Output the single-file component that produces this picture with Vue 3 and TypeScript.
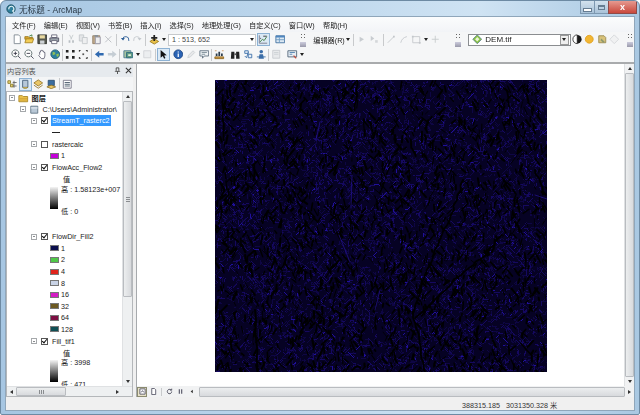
<template>
  <div class="win">
    <header class="titlebar">
      <svg class="app-icon" viewBox="0 0 12 12" aria-hidden="true">
        <circle cx="6" cy="6" r="5" fill="#2f7f9c" stroke="#1d4a5c" />
        <path d="M3.5 6.5a3 3 0 1 1 4.500 1.800L9.500 10.500" fill="none" stroke="#e4f2f6" stroke-width="1.400" />
      </svg>
      <span class="title-text">无标题 - ArcMap</span>
      <div class="win-btns">
        <span class="win-btn"><i class="glyph-min"></i></span>
        <span class="win-btn"><i class="glyph-max"></i></span>
        <span class="win-btn win-btn--close">x</span>
      </div>
    </header>

    <div class="client">
      <nav class="menubar">
        <span v-for="m in menus" :key="m">{{ m }}</span>
      </nav>

      <div class="toolbar toolbar--one">
        <template v-for="(it, i) in toolbarOne" :key="i">
          <i v-if="it === '|'" class="sep"></i>
          <i v-else-if="it === '^'" class="grip"></i>
          <i v-else-if="it === 'v'" class="drop"></i>
          <i v-else-if="it[0] === '_'" class="gap" :style="{ width: it.slice(1) + 'px' }"></i>
          <div v-else-if="it === 'scale'" class="combo combo--scale">
            <span>1 : 513, 652</span><i class="drop"></i>
          </div>
          <span v-else-if="it === 'editor'" class="tool-label">编辑器(R)</span>
          <div v-else-if="it === 'layer'" class="combo combo--layer">
            <svg class="ico" viewBox="0 0 12 12"><path d="M6 1l5 5-5 5-5-5z" fill="#8cc63f" stroke="#5a7f8a" /><path d="M6 3.500L8.500 6 6 8.500 3.500 6z" fill="#eaf5d8" /></svg>
            <span class="layer-name">DEM.tif</span>
            <span class="combo-btn"><i class="drop"></i></span>
          </div>
          <span v-else class="tool" :class="{ 'is-active': it === 'toggle' }">
            <svg class="ico" viewBox="0 0 12 12">
              <path v-for="(p, n) in icons[it]" :key="n" :d="p[0]" :fill="p[1]" :stroke="p[2] || 'none'" />
            </svg>
          </span>
        </template>
      </div>

      <div class="toolbar toolbar--two">
        <template v-for="(it, i) in toolbarTwo" :key="i">
          <i v-if="it === '|'" class="sep"></i>
          <i v-else-if="it === 'v'" class="drop"></i>
          <i v-else-if="it[0] === '_'" class="gap" :style="{ width: it.slice(1) + 'px' }"></i>
          <span v-else class="tool" :class="{ 'is-active': it === 'select' }">
            <svg class="ico" viewBox="0 0 12 12">
              <path v-for="(p, n) in icons[it]" :key="n" :d="p[0]" :fill="p[1]" :stroke="p[2] || 'none'" />
            </svg>
          </span>
        </template>
      </div>

      <main class="work">
        <aside class="toc">
          <div class="toc-head">
            <span>内容列表</span>
            <span class="toc-head__btns">
              <svg viewBox="0 0 8 8"><path d="M2.500 1h3v3l1 1h-5l1-1zM4 5v3" fill="none" stroke="#444" /></svg>
              <svg viewBox="0 0 8 8"><path d="M1 1l6 6M7 1L1 7" stroke="#333" stroke-width="1.200" /></svg>
            </span>
          </div>
          <div class="toc-tools">
            <span v-for="t in tocTools" :key="t" class="tool" :class="{ 'is-active': t === 'tocSource' }">
              <svg class="ico" viewBox="0 0 12 12">
                <path v-for="(p, n) in icons[t]" :key="n" :d="p[0]" :fill="p[1]" :stroke="p[2] || 'none'" />
              </svg>
            </span>
            <i class="sep"></i>
            <span class="tool">
              <svg class="ico" viewBox="0 0 12 12"><path d="M1.500 1.500h9v9h-9z" fill="#fff" stroke="#778" /><path d="M3 4h6M3 6h6M3 8h6" stroke="#456" /></svg>
            </span>
          </div>
          <div class="toc-body">
            <div class="tree">
              <div class="tree-inner">
                <template v-for="(r, i) in rows" :key="i">
                  <div v-if="r.kind === 'root'" class="row row--root">
                    <i class="box"></i>
                    <svg class="ico ico--tree" viewBox="0 0 12 12"><path d="M1 3h4l1 1h5v6H1z" fill="#f0c850" stroke="#a98524" /><path d="M2 6h9M2 8h9" stroke="#c99a2e" /></svg>
                    <b>图层</b>
                  </div>
                  <div v-else-if="r.kind === 'path'" class="row row--path">
                    <i class="box"></i>
                    <svg class="ico ico--tree" viewBox="0 0 12 12"><path d="M2 2.500h8v8H2z" fill="#b9c8d6" stroke="#5f7284" /><path d="M2 4.500h8" stroke="#f2f6f9" /></svg>
                    <span>C:\Users\Administrator\</span>
                  </div>
                  <div v-else-if="r.kind === 'layer'" class="row row--layer">
                    <i class="box"></i>
                    <i class="check" :class="{ 'is-on': r.on }"></i>
                    <span :class="{ 'is-picked': r.picked }">{{ r.text }}</span>
                  </div>
                  <div v-else-if="r.kind === 'dash'" class="row row--dash"><i></i></div>
                  <div v-else-if="r.kind === 'swatch'" class="row row--swatch">
                    <i class="swatch" :style="{ background: r.color }"></i>
                    <span>{{ r.text }}</span>
                  </div>
                  <div v-else-if="r.kind === 'head'" class="row row--head">值</div>
                  <div v-else-if="r.kind === 'ramp'" class="ramp">
                    <i class="ramp__bar"></i>
                    <div class="ramp__labels">
                      <span>高 : {{ r.high }}</span>
                      <span>低 : {{ r.low }}</span>
                    </div>
                  </div>
                  <div v-else class="row-gap"></div>
                </template>
              </div>
              <div class="vbar">
                <i class="arrow arrow--up"></i>
                <i class="thumb-v thumb-v--toc"><u></u></i>
                <i class="arrow arrow--down"></i>
              </div>
            </div>
            <div class="hbar hbar--toc">
              <i class="arrow arrow--left"></i>
              <i class="thumb-h"><u></u></i>
              <i class="arrow arrow--right"></i>
            </div>
          </div>
        </aside>

        <section class="map-pane">
          <div class="map-row">
            <div class="map-view">
              <canvas ref="rasterEl" class="raster" width="332" height="292"></canvas>
            </div>
            <div class="vbar vbar--map">
              <i class="arrow arrow--up"></i>
              <i class="thumb-v"></i>
              <i class="arrow arrow--down"></i>
            </div>
          </div>
          <div class="map-foot">
            <span class="foot-btn is-active"><svg viewBox="0 0 8 8"><path d="M1 1h6v6H1z" fill="#fff" stroke="#556" /><path d="M2.500 5l1.500-2 1.500 2" fill="none" stroke="#556" /></svg></span>
            <span class="foot-btn"><svg viewBox="0 0 8 8"><path d="M2 .5h3l1.500 1.500v5.500H2z" fill="#fff" stroke="#556" /></svg></span>
            <i class="sep sep--foot"></i>
            <span class="foot-btn"><svg viewBox="0 0 8 8"><path d="M6.500 4a2.500 2.500 0 1 1-.8-1.800M6.500 .8v1.700H4.800" fill="none" stroke="#445" /></svg></span>
            <span class="foot-btn"><svg viewBox="0 0 8 8"><path d="M2 1.500h1.300v5H2zM4.700 1.500H6v5H4.700z" fill="#556" /></svg></span>
            <span class="foot-btn"><svg viewBox="0 0 8 8"><path d="M5.500 2v4L3 4z" fill="#333" /></svg></span>
            <i class="thumb-h thumb-h--map"></i>
            <i class="arrow arrow--right"></i>
          </div>
        </section>
      </main>

      <footer class="statusbar">388315.185&nbsp;&nbsp;&nbsp;3031350.328 米</footer>
    </div>
  </div>
</template>

<script setup lang="ts">
import { onMounted, ref } from "vue"

type Shape = [string, string, string?]

interface Row {
  kind: "root" | "path" | "layer" | "dash" | "swatch" | "head" | "ramp" | "gap"
  text?: string
  on?: boolean
  picked?: boolean
  color?: string
  high?: string
  low?: string
}

const menus = ["文件(F)", "编辑(E)", "视图(V)", "书签(B)", "插入(I)", "选择(S)", "地理处理(G)", "自定义(C)", "窗口(W)", "帮助(H)"]

const icons: Record<string, Shape[]> = {
  new: [["M2.500 1h5l2 2v8h-7z", "#fff", "#7d8790"]],
  open: [["M1 3h4l1 1h4v2H1z", "#d9a830", "#9c7a1f"], ["M1 10l1.500-4.500H11L9.500 10z", "#f3cd57", "#a8831f"], ["M6 2.500l3-1.500v2", "none", "#3a7a3a"]],
  save: [["M1 1h10v10H1z", "#54574e", "#33352f"], ["M3 1.500h6v3.500H3z", "#e8d9a0"], ["M3.500 7.500h5V11h-5z", "#cfd3d6"]],
  print: [["M3 1h6v3H3z", "#fff", "#667"], ["M1 4.500h10v4H1z", "#9aa3ab", "#556"], ["M3 7.500h6V11H3z", "#fff", "#667"]],
  cut: [["M4 1l2.500 5M8 1L5.500 6", "none", "#c5c9cc"], ["M3 7h2v3H3zM7 7h2v3H7z", "#b8bec3"]],
  copy: [["M1.500 1h5v7h-5z", "#e4e6e8", "#c4c8cc"], ["M5 4h5.500v7H5z", "#eeeff0", "#c4c8cc"]],
  paste: [["M2 2h8v9H2z", "#bfa98a", "#948068"], ["M5 3.500h5.500V11H5z", "#eee", "#99a"], ["M4 1h4v2H4z", "#88929a"]],
  del: [["M2.500 2.500l7 7M9.500 2.500l-7 7", "none", "#b9bdc1"]],
  undo: [["M3 6a3.500 3.500 0 0 1 7 1v1", "none", "#2a5d97"], ["M1 4.500l2.500 3 2-3z", "#2a5d97"]],
  redo: [["M9 6a3.500 3.500 0 0 0-7 1v1", "none", "#c3c8cd"], ["M11 4.500l-2.500 3-2-3z", "#c3c8cd"]],
  add: [["M1 8.500l5-3 5 3-5 3z", "#e9c14a", "#9c7c1c"], ["M5 1h2v2.500h2.500v2H7V8H5V5.500H2.500v-2H5z", "#222"]],
  toggle: [["M1.500 10.500h9M1.500 1.500v9", "none", "#778"], ["M2.500 9l2.500-3 2 1.500 3-4.500", "none", "#3a7a3a"], ["M6 2.500h4M2.500 5h1", "none", "#333"]],
  table: [["M1 2h10v8H1z", "#dce8f2", "#3f6f9f"], ["M1 2h10v2H1z", "#4f86bf"], ["M1 6.500h10M5 4v6", "none", "#6f9bc4"]],
  arrowOne: [["M3 3l5 3-5 3z", "#c8ccd0"]],
  arrowTwo: [["M2 2l4 3-4 3z", "#c8ccd0"], ["M7 7h3v3H7z", "#d4d7da"]],
  lineOne: [["M2 10L9 3", "none", "#c3c7cb"], ["M8 2h2v2H8z", "#c3c7cb"]],
  lineTwo: [["M2 10c1-4 3-6 7-7", "none", "#c3c7cb"]],
  shapeOne: [["M2 3h8v7H2z", "none", "#c3c7cb"], ["M1 2h2v2H1zM9 9h2v2H9z", "#c3c7cb"]],
  cross: [["M6 2v8M2 6h8", "none", "#c6cacd"]],
  contrast: [["M6 1a5 5 0 0 0 0 10z", "#fff", "#333"], ["M6 1a5 5 0 0 1 0 10z", "#1a1a1a"]],
  sun: [["M6 1.500a4.500 4.500 0 1 0 .01 0z", "#f2b632", "#e0a020"]],
  swipe: [["M2 2h6l2 2v6H2z", "#d8c27a", "#9a8a50"], ["M5 5l4 4-2 1-3-3z", "#8f9a6f"]],
  diamond: [["M6 1l5 5-5 5-5-5z", "#f0f1f2", "#d3d6d9"]],
  zoomIn: [["M5 1a4 4 0 1 0 .01 0z", "#fff", "#566"], ["M3 5h4M5 3v4", "none", "#334"], ["M8 8l3 3", "none", "#445"]],
  zoomOut: [["M5 1a4 4 0 1 0 .01 0z", "#fff", "#566"], ["M3 5h4", "none", "#334"], ["M8 8l3 3", "none", "#445"]],
  hand: [["M3 6V3.500h1V2h1v-.5h1V2h1v1h1v1h1v4l-1 3H5L2 7.500l1-1z", "#fff", "#667"]],
  globe: [["M6 1a5 5 0 1 0 .01 0z", "#2c7f9f", "#1e5a70"], ["M3 3l3 1 0 2-3 1zM7 6l3-1 0 3-2 1z", "#8fbf56"]],
  fixedIn: [["M1 1h3v3H1zM8 1h3v3H8zM1 8h3v3H1zM8 8h3v3H8z", "#222"]],
  fixedOut: [["M1 1h2v1H2v1H1zM9 1h2v2h-1V2H9zM1 9h1v1h1v1H1zM10 9h1v2H9v-1h1z", "#222"], ["M5 5h2v2H5z", "#555"]],
  back: [["M1 6l5-4v2.500h5v3H6V10z", "#2f69b0"]],
  forward: [["M11 6L6 2v2.500H1v3h5V10z", "#c5cdd4"]],
  layout: [["M1 2h8v8H1z", "#a7c4a0", "#4a7890"], ["M4 4h7v6H4z", "#5f9a80", "#2f6a80"], ["M6 6h3v2H6z", "#e6f0e0"]],
  blank: [["M2 2h8v8H2z", "#eceef0", "#d0d3d6"]],
  select: [["M3 1v9l2.500-2L7 11l1.500-.7L7 7.500l3-.5z", "#111"]],
  info: [["M6 1a5 5 0 1 0 .01 0z", "#2a63b5", "#1c4480"], ["M5.300 5h1.400v4H5.300zM5.300 2.800h1.400v1.300H5.300z", "#fff"]],
  pencil: [["M2 10l1-3 5-5 2 2-5 5z", "#e7e8ea", "#ccd0d3"]],
  bubble: [["M1 2h10v6H6l-2 2.500V8H1z", "#eef2f5", "#607080"], ["M3 4h6M3 6h4", "none", "#7a8a96"]],
  gauge: [["M1 9h10v2H1z", "#d9a24a", "#8a6420"], ["M2 5h2v3H2zM5 3h2v5H5zM8 5h2v3H8z", "#2c3c4c"], ["M1 2h2M9 2h2", "none", "#c96"]],
  binoc: [["M1.500 3h3.500v8h-4zM7 3h3.500l.5 8H7z", "#222"], ["M5 5h2v2H5z", "#555"]],
  route: [["M2 2h4v3H2z", "#e8f0f8", "#3c6ea8"], ["M6 6h4v4H6z", "#e8f0f8", "#3c6ea8"], ["M2 8l2 2 2-6", "none", "#3c6ea8"]],
  person: [["M6 1a2 2 0 1 0 .01 0zM3 11l1-5h4l1 5z", "#3c6ea8"], ["M1 9h3M8 9h3", "none", "#3c6ea8"]],
  report: [["M2 1.500h8v9H2z", "#e8eaec", "#c8ccd0"], ["M3.500 4h5M3.500 6h5", "none", "#ccd0d3"]],
  screen: [["M1 2h10v7H1z", "#e6edf3", "#4f6477"], ["M3 4h6M3 6h3", "none", "#4f7fae"], ["M8 7l3 3-1 1-3-3z", "#c04a3a"]],
  tocOrder: [["M1 2h3v3H1z", "#e7d36f", "#8a7a2c"], ["M4 6h3v3H4z", "#e7d36f", "#8a7a2c"], ["M8 2v8M6.500 4H11M6.500 8H11", "none", "#666"]],
  tocSource: [["M3 1.500h6v8H3z", "#b7c8d9", "#47607a"], ["M3 9.500c1 1.500 5 1.500 6 0", "#e7bf4f", "#8a7a2c"]],
  tocDraw: [["M6 1l5 3.500-5 3.500-5-3.500z", "#e9c667", "#97782a"], ["M1 7l5 3.500L11 7", "none", "#97782a"]],
  tocSel: [["M2.500 1.500h7v6h-7z", "#3b6d9f", "#2d4f72"], ["M1 9l5-2 5 2-5 2z", "#e9c667", "#97782a"]],
}

// "|" separator, "^" grip, "v" dropdown arrow, "_n" n pixels of extra space
const toolbarOne = ["new", "open", "save", "print", "|", "cut", "copy", "paste", "del", "|", "undo", "redo", "|", "add", "v", "scale", "toggle", "_4", "table", "_7", "^", "editor", "v", "|", "arrowOne", "arrowTwo", "|", "lineOne", "lineTwo", "shapeOne", "v", "cross", "_6", "^", "layer", "contrast", "sun", "swipe", "diamond", "^"]
const toolbarTwo = ["zoomIn", "zoomOut", "hand", "globe", "|", "fixedIn", "fixedOut", "|", "back", "forward", "|", "layout", "v", "blank", "|", "select", "_2", "info", "pencil", "bubble", "|", "gauge", "_3", "binoc", "route", "person", "|", "report", "_3", "screen", "v"]
const tocTools = ["tocOrder", "tocSource", "tocDraw", "tocSel"]

const rows: Row[] = [
  { kind: "root" },
  { kind: "path" },
  { kind: "layer", text: "StreamT_rasterc2", on: true, picked: true },
  { kind: "dash" },
  { kind: "layer", text: "rastercalc", on: false },
  { kind: "swatch", text: "1", color: "#c400d8" },
  { kind: "layer", text: "FlowAcc_Flow2", on: true },
  { kind: "head" },
  { kind: "ramp", high: "1.58123e+007", low: "0" },
  { kind: "gap" },
  { kind: "layer", text: "FlowDir_Fill2", on: true },
  { kind: "swatch", text: "1", color: "#0b0f4d" },
  { kind: "swatch", text: "2", color: "#4fc848" },
  { kind: "swatch", text: "4", color: "#e0241c" },
  { kind: "swatch", text: "8", color: "#c9d3e6" },
  { kind: "swatch", text: "16", color: "#d41cc4" },
  { kind: "swatch", text: "32", color: "#6d5a22" },
  { kind: "swatch", text: "64", color: "#7c0f42" },
  { kind: "swatch", text: "128", color: "#0f4f54" },
  { kind: "layer", text: "Fill_tif1", on: true },
  { kind: "head" },
  { kind: "ramp", high: "3998", low: "471" },
]

const rasterEl = ref<HTMLCanvasElement | null>(null)

// seeded so the stream texture stays the same from run to run
function makeRandom(seed: number) {
  let s = seed
  return () => {
    s = (s * 16807) % 2147483647
    return s / 2147483647
  }
}

const rivers: number[][] = [
  [248, 100, 238, 130, 225, 160, 212, 190, 198, 232],
  [198, 232, 205, 265, 208, 290],
  [287, 155, 270, 175, 245, 195, 222, 218, 200, 238],
  [40, 230, 42, 290],
  [142, 0, 140, 30],
  [320, 90, 330, 115],
  [8, 15, 8, 60],
]

function drawRaster(canvas: HTMLCanvasElement) {
  const ctx = canvas.getContext("2d")
  if (!ctx) return
  const rand = makeRandom(48271)
  const w = canvas.width
  const h = canvas.height

  ctx.fillStyle = "#060224"
  ctx.fillRect(0, 0, w, h)

  // streams stepped pixel by pixel along the 8 flow directions
  const dirs = [[0, 1], [1, 1], [-1, 1], [1, 0], [-1, 0], [0, -1], [1, -1], [-1, -1]]
  for (let i = 0; i < 7000; i++) {
    let x = Math.floor(rand() * w)
    let y = Math.floor(rand() * h)
    let d = Math.floor(rand() * dirs.length)
    const steps = 2 + Math.floor(rand() * 5)
    const r = rand()
    ctx.fillStyle = r > 0.96 ? "#20109a" : r > 0.55 ? "#150960" : "#0e0644"
    for (let s = 0; s < steps; s++) {
      ctx.fillRect(x, y, 1, 1)
      if (rand() > 0.6) d = Math.floor(rand() * dirs.length)
      x += dirs[d][0]
      y += dirs[d][1]
    }
  }

  // black valley strokes, mostly running north-south
  ctx.lineCap = "round"
  ctx.strokeStyle = "#000"
  for (let i = 0; i < 2300; i++) {
    const x = rand() * w
    const y = rand() * h
    const a = Math.PI / 2 + (rand() - 0.5) * 1.9
    const len = 2 + rand() * 7
    ctx.lineWidth = 0.7 + rand() * 1.4
    ctx.beginPath()
    ctx.moveTo(x, y)
    ctx.lineTo(x + Math.cos(a) * len, y + Math.sin(a) * len)
    ctx.stroke()
  }

  // main rivers, broken up by small sideways wobble
  ctx.lineWidth = 1.8
  for (const r of rivers) {
    ctx.beginPath()
    ctx.moveTo(r[0], r[1])
    for (let i = 2; i < r.length; i += 2) {
      const x0 = r[i - 2]
      const y0 = r[i - 1]
      for (let t = 1; t <= 6; t++) {
        const k = t / 6
        ctx.lineTo(x0 + (r[i] - x0) * k + (rand() - 0.5) * 2.5, y0 + (r[i + 1] - y0) * k)
      }
    }
    ctx.stroke()
  }

  // the few brighter stream segments
  ctx.strokeStyle = "#2a16a8"
  ctx.lineWidth = 0.6
  const bright = [[105, 42, 101, 60], [137, 95, 136, 128], [124, 155, 135, 182], [165, 210, 160, 230], [320, 115, 332, 119]]
  for (const b of bright) {
    ctx.beginPath()
    ctx.moveTo(b[0], b[1])
    ctx.lineTo(b[2], b[3])
    ctx.stroke()
  }
}

onMounted(() => {
  if (rasterEl.value) drawRaster(rasterEl.value)
})
</script>

<style>
html,
body {
  margin: 0;
  background: #fff;
}
</style>

<style scoped>
.win {
  width: 640px;
  height: 415px;
  box-sizing: border-box;
  display: flex;
  flex-direction: column;
  padding: 0 4px 3px 4px;
  border: 1px solid #6d8aa3;
  border-radius: 6px 6px 2px 2px;
  background: linear-gradient(90deg, #a6c6e2 0%, #bcd6ec 45%, #cfe3f3 75%, #a9c8e2 100%);
  font-family: "Liberation Sans", "Noto Sans CJK SC", sans-serif;
  font-size: 7.200px;
  color: #222;
  overflow: hidden;
  filter: blur(0.3px);
}

.titlebar {
  height: 15px;
  flex: none;
  display: flex;
  align-items: center;
  gap: 3px;
  margin-left: 1px;
}

.app-icon {
  width: 10px;
  height: 10px;
}

.title-text {
  font-size: 8.600px;
  color: #2b3a48;
}

.win-btns {
  margin-left: auto;
  display: flex;
  align-self: flex-start;
  height: 13px;
  margin-right: -2px;
}

.win-btn {
  width: 15px;
  height: 13px;
  display: flex;
  align-items: center;
  justify-content: center;
  box-sizing: border-box;
  border: 1px solid #7d98b0;
  border-top: none;
  margin-left: -1px;
  background: linear-gradient(#d3e2ee, #a9c2d8);
}

.win-btn--close {
  width: 29px;
  background: linear-gradient(#e69a90, #c9483c);
  color: #fff;
  font-size: 9px;
  font-weight: 700;
  border-color: #8f4a48;
}

.glyph-min {
  width: 7px;
  height: 2px;
  margin-top: 5px;
  background: #fff;
  border: 1px solid #667d92;
}

.glyph-max {
  width: 7px;
  height: 5px;
  border: 1px solid #667d92;
  border-top-width: 2px;
  box-sizing: border-box;
}

.client {
  flex: 1;
  min-height: 0;
  display: flex;
  flex-direction: column;
  background: #f0f0f0;
  border: 1px solid #8fa6ba;
}

.menubar {
  height: 15px;
  flex: none;
  display: flex;
  align-items: center;
  gap: 8.200px;
  padding-left: 6px;
  background: linear-gradient(#fbfcfd, #f2f4f7);
  white-space: nowrap;
}

.toolbar {
  height: 15px;
  flex: none;
  display: flex;
  align-items: center;
  padding-left: 5px;
  background: #f5f6f7;
  overflow: hidden;
}

.toolbar--two {
  padding-left: 4px;
  border-bottom: 2px solid #a9abad;
}

.toolbar--two .tool {
  width: 12.800px;
}

.toolbar--two .sep {
  margin: 0 1px;
}

.tool {
  width: 12.400px;
  height: 13px;
  flex: none;
  display: flex;
  align-items: center;
  justify-content: center;
  box-sizing: border-box;
}

.tool.is-active {
  background: #dbe9f5;
  border: 1px solid #8db2d4;
}

.ico {
  width: 10.500px;
  height: 10.500px;
  flex: none;
}

.sep {
  width: 1px;
  height: 12px;
  margin: 0 1.700px;
  flex: none;
  background: #c8cacc;
}

.gap {
  flex: none;
  height: 1px;
}

.drop {
  flex: none;
  width: 0;
  height: 0;
  margin: 0 1.500px;
  border-left: 2.500px solid transparent;
  border-right: 2.500px solid transparent;
  border-top: 3px solid #222;
}

.grip {
  flex: none;
  width: 6px;
  height: 14px;
  margin: 0 7px;
  background:
    linear-gradient(#666, #666) 1px 1px / 1px 1px no-repeat,
    linear-gradient(#666, #666) 4px 1px / 1px 1px no-repeat,
    linear-gradient(#666, #666) 1px 4px / 1px 1px no-repeat,
    linear-gradient(#666, #666) 4px 4px / 1px 1px no-repeat,
    linear-gradient(#ccd, #99a) 0 9px / 100% 5px no-repeat;
}

.combo {
  flex: none;
  height: 12px;
  display: flex;
  align-items: center;
  box-sizing: border-box;
  background: #fff;
  border: 1px solid #c6c9cc;
  padding-left: 3px;
}

.combo .drop {
  margin-left: auto;
}

.combo--scale {
  width: 88.500px;
  margin: 0 1px 0 .5px;
  color: #444;
}

.combo--layer {
  width: 103px;
  border-color: #8a8d90;
}

.layer-name {
  margin-left: 3px;
  font-size: 8px;
}

.combo-btn {
  width: 9px;
  height: 10px;
  margin-left: auto;
  margin-right: 1px;
  display: flex;
  align-items: center;
  background: #eee;
  border: 1px solid #999;
  box-sizing: border-box;
}

.combo-btn .drop {
  margin: 0 auto;
}

.tool-label {
  flex: none;
  white-space: nowrap;
}

.work {
  flex: 1;
  min-height: 0;
  display: flex;
}

.toc {
  width: 127px;
  flex: none;
  display: flex;
  flex-direction: column;
  background: #f0f0f0;
}

.toc-head {
  height: 13px;
  flex: none;
  display: flex;
  align-items: center;
  justify-content: space-between;
  padding: 0 1px;
  color: #555;
  background: #e6eaee;
}

.toc-head__btns {
  display: flex;
  gap: 4px;
}

.toc-head__btns svg {
  width: 7px;
  height: 7px;
}

.toc-tools {
  height: 14px;
  flex: none;
  display: flex;
  align-items: center;
  background: #f4f5f6;
}

.toc-tools .tool {
  width: 13px;
}

.toc-tools .sep {
  margin: 0 1px;
}

.toc-body {
  flex: 1;
  min-height: 0;
  display: flex;
  flex-direction: column;
  border: 1px solid #b4b7ba;
  background: #fff;
}

.tree {
  flex: 1;
  min-height: 0;
  display: flex;
}

.tree-inner {
  flex: 1;
  min-width: 0;
  overflow: hidden;
  white-space: nowrap;
}

.row {
  height: 11.600px;
  display: flex;
  align-items: center;
}

.row-gap {
  height: 13.200px;
}

.box {
  width: 6px;
  height: 6px;
  flex: none;
  box-sizing: border-box;
  border: 1px solid #a5a8ab;
  background: linear-gradient(#8a8d90, #8a8d90) center / 2px 1px no-repeat;
}

.row--root {
  padding-left: 2px;
}

.row--root b {
  margin-left: 3px;
  font-weight: 700;
}

.row--root .ico--tree {
  margin-left: 3px;
}

.row--path {
  padding-left: 13px;
}

.row--path .ico--tree {
  margin-left: 3px;
}

.row--path span {
  margin-left: 3px;
}

.row--layer {
  padding-left: 24px;
}

.check {
  width: 7px;
  height: 7px;
  margin-left: 4px;
  margin-right: 4px;
  flex: none;
  box-sizing: border-box;
  border: 1px solid #555;
  background: #fff;
  position: relative;
}

.check.is-on::after {
  content: "";
  position: absolute;
  left: 1px;
  top: -1px;
  width: 2px;
  height: 4px;
  border: solid #111;
  border-width: 0 1.300px 1.300px 0;
  transform: rotate(40deg);
}

.is-picked {
  background: #3399ff;
  color: #fff;
  padding: 1px;
  margin-left: -1px;
}

.row--dash {
  padding-left: 45px;
}

.row--dash i {
  width: 8px;
  height: 1px;
  background: #222;
}

.row--swatch {
  padding-left: 43px;
  gap: 2px;
}

.swatch {
  width: 9px;
  height: 6px;
  flex: none;
  box-sizing: border-box;
  border: 1px solid #777;
}

.row--head {
  padding-left: 56px;
}

.ramp {
  height: 33px;
  display: flex;
  padding-left: 43px;
  gap: 3px;
}

.ramp__bar {
  width: 8px;
  height: 22px;
  flex: none;
  margin-top: 2px;
  background: linear-gradient(#f4f4f4, #000);
}

.ramp__labels {
  display: flex;
  flex-direction: column;
  justify-content: space-between;
  height: 31px;
  line-height: 9px;
}

.vbar {
  width: 10px;
  flex: none;
  box-sizing: border-box;
  display: flex;
  flex-direction: column;
  align-items: center;
  background: #eef0f1;
  border-left: 1px solid #dfe1e3;
}

.vbar--map {
  background: #f1f2f3;
}

.thumb-v {
  flex: 1;
  width: 100%;
  box-sizing: border-box;
  border: 1px solid #b9bcc0;
  border-radius: 1px;
  background: linear-gradient(90deg, #eceeef, #d8dadd);
  display: flex;
  align-items: center;
  justify-content: center;
}

.thumb-v--toc {
  flex: none;
  height: 196px;
  margin-bottom: auto;
}

.thumb-v u {
  width: 4px;
  height: 5px;
  background: repeating-linear-gradient(#8a8d90 0 1px, transparent 1px 2px);
}

.arrow {
  flex: none;
  width: 0;
  height: 0;
  border: 2.500px solid transparent;
}

.arrow--up {
  border-top: none;
  border-bottom: 3px solid #333;
  margin: 3px 0;
}

.arrow--down {
  border-bottom: none;
  border-top: 3px solid #333;
  margin: 3px 0;
}

.arrow--left {
  border-left: none;
  border-right: 3px solid #333;
  margin: 0 3px;
}

.arrow--right {
  border-right: none;
  border-left: 3px solid #333;
  margin: 0 3px;
}

.hbar {
  height: 9px;
  flex: none;
  display: flex;
  align-items: center;
  background: #eef0f1;
  border-top: 1px solid #dfe1e3;
}

.hbar--toc .arrow--right {
  margin-left: auto;
  margin-right: 13px;
}

.thumb-h {
  height: 100%;
  width: 50px;
  box-sizing: border-box;
  border: 1px solid #b9bcc0;
  border-radius: 1px;
  background: linear-gradient(#eceeef, #d8dadd);
  display: flex;
  align-items: center;
  justify-content: center;
  flex: none;
}

.thumb-h u {
  width: 5px;
  height: 4px;
  background: repeating-linear-gradient(90deg, #8a8d90 0 1px, transparent 1px 2px);
}

.thumb-h--map {
  flex: 1;
  height: 10px;
  margin-left: 2px;
}

.map-pane {
  flex: 1;
  min-width: 0;
  display: flex;
  flex-direction: column;
  margin-left: 3px;
  border-left: 1px solid #a7aaad;
  background: #fff;
}

.map-row {
  flex: 1;
  min-height: 0;
  display: flex;
}

.map-view {
  flex: 1;
  min-width: 0;
  padding: 16px 0 0 78px;
  background: #fff;
}

.raster {
  display: block;
  width: 332px;
  height: 292px;
  filter: blur(0.4px);
}

.map-foot {
  height: 11px;
  flex: none;
  display: flex;
  align-items: center;
  background: #f1f2f3;
}

.foot-btn {
  width: 10px;
  height: 10px;
  flex: none;
  display: flex;
  align-items: center;
  justify-content: center;
  box-sizing: border-box;
  margin-right: 1px;
}

.foot-btn.is-active {
  background: #e8e2c8;
  border: 1px solid #8b8b70;
}

.foot-btn svg {
  width: 7px;
  height: 7px;
}

.sep--foot {
  height: 8px;
  margin: 0 2px;
}

.statusbar {
  height: 13px;
  flex: none;
  display: flex;
  align-items: center;
  box-sizing: border-box;
  padding: 2px 0 0 456px;
  white-space: pre;
  color: #333;
  background: #f0f0f0;
}
</style>
